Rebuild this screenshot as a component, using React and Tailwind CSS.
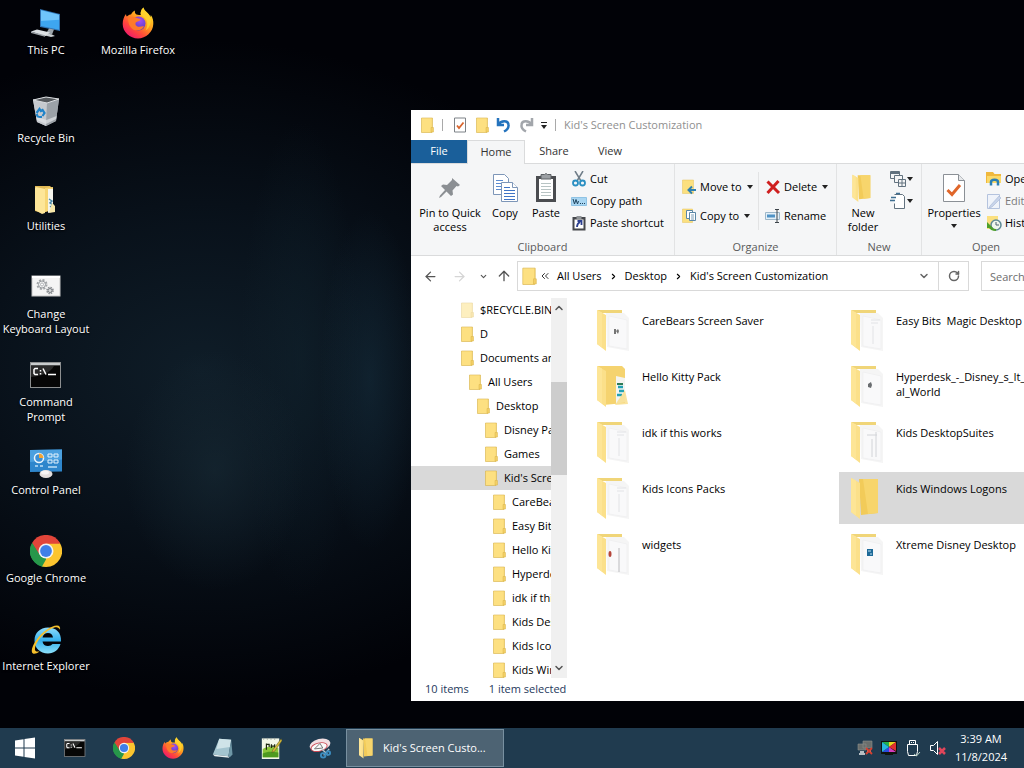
import React, { useState } from 'react';
import { ArrowLeft, ArrowRight, ArrowUp, ChevronDown, ChevronRight, ChevronUp, ChevronsLeft, RotateCw } from 'lucide-react';

/* ---------- Desktop icons ---------- */

const ThisPcIcon = ({ className }) => (
    <svg viewBox="0 0 32 32" className={className}>
        <path d="M10 2l20 5v17l-20-4z" fill="#2f6fae" />
        <path d="M11 3.300l18 4.400v15l-18-3.600z" fill="#3ea6f0" />
        <path d="M11 3.300l18 4.400v5L11 14z" fill="#6fc4fb" />
        <path d="M19 21.500l5 1-2 5-6-1z" fill="#9ba4ab" />
        <path d="M15 26l7 1.500 3 1.500-4 1-8-2z" fill="#c9ced2" />
        <path d="M1 24.500l6-2 13 3-5 3.800z" fill="#dde1e4" />
        <path d="M1 24.500l14 3.800v1.500L1 26z" fill="#9da3a8" />
    </svg>
);

const FirefoxIcon = ({ className }) => (
    <svg viewBox="0 0 32 32" className={className}>
        <defs>
            <linearGradient id="ffBody" x1="0.85" y1="0.1" x2="0.2" y2="0.95">
                <stop offset="0" stopColor="#ffe226" />
                <stop offset="0.4" stopColor="#ff9a1f" />
                <stop offset="0.7" stopColor="#ff4a3a" />
                <stop offset="1" stopColor="#f0186c" />
            </linearGradient>
            <radialGradient id="ffGlobe" cx="0.6" cy="0.3" r="0.8">
                <stop offset="0" stopColor="#a14df5" />
                <stop offset="1" stopColor="#4a3bb5" />
            </radialGradient>
        </defs>
        <path d="M4 7c0 1 .3 2 .8 2.600C6 8 8 7.400 9 7.400c1-2 3-3.400 4-3.800-.5 1.500 0 3 1.500 4 1 .6 3 .4 4.500.4-1-2.500.5-6 2.500-7.500.5 4 5.500 5 7 9.500.4-.8.300-1.600.1-2.200C31 11 31.500 14 31.300 17 31 25 24 31.500 16 31.500S.7 25 .7 17c0-4 1.300-7.500 3.300-10z" fill="url(#ffBody)" />
        <circle cx="16.500" cy="16.500" r="7" fill="url(#ffGlobe)" />
        <path d="M6 11c3-2 6-1.500 9 0 2 1 3.500.5 3.500 1.700-.3 1.300-2.500 1.500-4 2.200-1.500.8-1.500 3 .5 4.300 2.500 1.500 5-.5 7 .2-2 3.800-7 5-11 3C7.500 20 6 16 6 11z" fill="#ff7a2b" />
        <path d="M21.500.5c.5 4 6 5.500 7 11 1 6-2 10-5 12 2-3.500 2.500-8 .5-11-1.500-2.500-3.500-3-5-4.500-1-2.500.5-6 2.500-7.500z" fill="#ffd42e" opacity="0.85" />
    </svg>
);

const RecycleBinIcon = ({ className }) => (
    <svg viewBox="0 0 32 32" className={className}>
        <path d="M3 5l13-3 13 2-3 22-10 5-9-4z" fill="#b9bdc2" />
        <path d="M3 5l14 3-1 23-9-4z" fill="#c6cacf" />
        <path d="M17 8l12-4-3 22-10 5z" fill="#9ca2a8" />
        <path d="M3 5l13-3 13 2-12 4z" fill="#54585c" stroke="#dadde0" strokeWidth="1" />
        <path d="M6.500 18l3-4 2 3M12 14l2.500 4-2 3M12 22H8l-1.500-3" fill="none" stroke="#1f83c9" strokeWidth="2.200" />
        <path d="M7 25l9 4 10-5 .5-3-10 4-10-3z" fill="#e3e6e8" opacity="0.7" />
    </svg>
);

const UtilitiesIcon = ({ className }) => (
    <svg viewBox="0 0 32 32" className={className}>
        <path d="M5 3h15l2 2v22l-10 3-7-2z" fill="#e2b955" />
        <path d="M6 4l9 2v24l-3 1-7-4V5z" fill="#fde699" />
        <path d="M15 5l8-1v22l-8 3z" fill="#f7d676" />
        <path d="M18 6h5v22l-5 2z" fill="#f5f5ee" />
        <path d="M19 16l3 2-2 2 3 2-3 2" fill="none" stroke="#4a88a6" strokeWidth="1.500" />
        <path d="M22 20l3 3v6l-6 1z" fill="#f8e8aa" />
    </svg>
);

const BatchFileIcon = ({ className }) => (
    <svg viewBox="0 0 32 32" className={className}>
        <rect x="2" y="5" width="28" height="20" fill="#f4f4f4" stroke="#c6c6c6" />
        <rect x="2" y="5" width="28" height="2" fill="#ffffff" />
        <circle cx="12" cy="13.500" r="4.500" fill="none" stroke="#a2a5a8" strokeWidth="2" strokeDasharray="2 1.530" />
        <circle cx="12" cy="13.500" r="3.500" fill="#f1f1f1" stroke="#989ca0" />
        <circle cx="12" cy="13.500" r="1.500" fill="#fff" stroke="#989ca0" strokeWidth="0.700" />
        <circle cx="20" cy="19.500" r="3" fill="none" stroke="#8c9094" strokeWidth="1.600" strokeDasharray="1.500 0.860" />
        <circle cx="20" cy="19.500" r="2" fill="#d7d9da" stroke="#7c8084" />
    </svg>
);

const TerminalIcon = ({ className }) => (
    <svg viewBox="0 0 32 32" className={className}>
        <rect x="0.500" y="3.500" width="30" height="25" fill="#060606" stroke="#8d8f90" />
        <path d="M1 4h29v2.500H1z" fill="#c9cccd" />
        <path d="M1 18C12 17 20 14 24 7h6v-.5H1z" fill="#2a2a2a" />
        <path d="M8 9.500H5l-1 1v4l1 1h3M10.500 11v1.500M10.500 14v1.500M13 9.500l3 6M18 15.500h8" fill="none" stroke="#fff" strokeWidth="1.500" />
    </svg>
);

const ControlPanelIcon = ({ className }) => (
    <svg viewBox="0 0 32 32" className={className}>
        <path d="M0 3l32-.5v22L0 25z" fill="#2e86cc" />
        <path d="M0 3l32-.5v10L0 15z" fill="#4ba0df" />
        <circle cx="9" cy="11" r="4.500" fill="#3c8fd4" stroke="#e9f4fc" strokeWidth="1.500" />
        <path d="M9 11V6.500A4.500 4.500 0 0 1 13.500 11z" fill="#f3a534" />
        <path d="M18 7h4v3h-4zM24 7h4v3h-4zM18 13h4v3h-4zM24 13h4v3h-4z" fill="none" stroke="#e4f2fc" />
        <path d="M5 19h3M10 19h3M18 20h9" stroke="#bfe0f6" strokeWidth="1.500" />
        <ellipse cx="16" cy="27" rx="6.500" ry="4" fill="#e4dedd" />
        <ellipse cx="15" cy="25.500" rx="4" ry="2" fill="#f8f5f4" />
    </svg>
);

const ChromeIcon = ({ className }) => (
    <svg viewBox="0 0 32 32" className={className}>
        <path d="M16 16L2.100 8A16 16 0 0 1 29.900 8z" fill="#e2453a" />
        <path d="M16 16L29.900 8A16 16 0 0 1 16 32z" fill="#fcc52f" />
        <path d="M16 16v16A16 16 0 0 1 2.100 8z" fill="#27974a" />
        <path d="M16 8.500h13.900L22.500 19.800z" fill="#fcc52f" />
        <path d="M16 8.500H29.900L29 6.500H14z" fill="#e2453a" />
        <path d="M9.500 19.800L2.100 8l7-1 2 4z" fill="#e2453a" />
        <path d="M2.100 8l7.400 11.800L16 23.500 12 31.500A16 16 0 0 1 2.100 8z" fill="#27974a" />
        <path d="M22.500 19.800L16 32l-4-.5 4.500-8z" fill="#fcc52f" />
        <circle cx="16" cy="16" r="7.500" fill="#f1f3f4" />
        <circle cx="16" cy="16" r="5.900" fill="#3f7fe8" />
    </svg>
);

const ExplorerIcon = ({ className }) => (
    <svg viewBox="0 0 32 32" className={className}>
        <defs>
            <linearGradient id="ieBlue" x1="0" y1="0" x2="0" y2="1">
                <stop offset="0" stopColor="#8fdcfb" />
                <stop offset="0.5" stopColor="#35b1ee" />
                <stop offset="1" stopColor="#8be0fb" />
            </linearGradient>
        </defs>
        <path fillRule="evenodd" d="M31 18.500H12.500c.5 3 2.500 4.500 5.500 4.500 2 0 3.500-.8 4.500-2h8C28.500 27 24 30.500 18 30.500 10 30.500 4.500 25 4.500 17.500S10 4.500 18 4.500s13.500 5 13 14zM12.500 14.500H23c-.3-2.700-2-4.500-5-4.500s-5 1.800-5.500 4.500z" fill="url(#ieBlue)" />
        <path d="M30 7c.5-3-.5-4.500-3-4.500C21 2.500 12 9 7 16 2 23 .5 29 3 30.500c1.500.8 4-.2 6.500-2C6 29 4.500 28 5 25c.7-4 4-9.500 9-14 5.500-5 11-7.500 13.500-6.500 1.300.5 2 1 2.500 2.500z" fill="#f6c02c" />
    </svg>
);

/* ---------- Taskbar icons ---------- */

const WindowsLogo = ({ className }) => (
    <svg viewBox="0 0 24 24" className={className}>
        <path d="M2 4.500l8.500-1.300v8.300H2zM11.500 3L22 1.500v10H11.500zM2 12.500h8.500v8.300L2 19.500zM11.500 12.500H22v10L11.500 21z" fill="#fff" />
    </svg>
);

const NotebookIcon = ({ className }) => (
    <svg viewBox="0 0 24 24" className={className}>
        <path d="M9 2l13 1-3 18-17-2z" fill="#a3c4cf" />
        <path d="M9 2l13 1-1.500 8L6 13z" fill="#cfe3e8" />
        <path d="M2 19l17 2 1 1.500L4 21z" fill="#e8eff0" />
        <path d="M19 21l3-18 1.500 16-3 3z" fill="#6f97a6" />
    </svg>
);

const NotepadPlusIcon = ({ className }) => (
    <svg viewBox="0 0 24 24" className={className}>
        <path d="M2 1.500h19V24H2z" fill="#f3f7e8" />
        <path d="M3 13c5-3 10-3 17-1v10H3z" fill="#8cc63a" />
        <path d="M3 18c6-3 11-2 17-1v5H3z" fill="#4e9a1f" />
        <path d="M7 7v7M7 8h3v3M12.500 8v4M16 8v4M11.500 10h5" stroke="#1d2a10" strokeWidth="1.300" fill="none" />
        <path d="M23 2L14 14l-1 3 3-1.500L24 4z" fill="#d6bb3c" stroke="#4c4a20" strokeWidth="0.500" />
        <path d="M4 1v2M8 1v2M12 1v2M16 1v2" stroke="#9aa29a" />
    </svg>
);

const SnippingIcon = ({ className }) => (
    <svg viewBox="0 0 24 24" className={className}>
        <ellipse cx="12" cy="8.500" rx="11.500" ry="6.500" fill="#f2dfe2" transform="rotate(-14 12 8.500)" />
        <ellipse cx="11" cy="11" rx="9" ry="4.500" fill="#fafafa" stroke="#c94550" transform="rotate(-14 11 11)" />
        <path d="M6 13l6-6 3 5z" fill="none" stroke="#6b6b6b" />
        <path d="M14 13l7 7M22 13l-6 7" stroke="#b9c7cf" strokeWidth="1.500" />
        <circle cx="15.500" cy="20" r="2.500" fill="none" stroke="#3c8cc0" strokeWidth="2" />
        <circle cx="21" cy="17.500" r="2" fill="none" stroke="#3c8cc0" strokeWidth="2" />
    </svg>
);

/* ---------- Folder drawings ---------- */

const SmallFolder = ({ className, faded }) => (
    <svg viewBox="0 0 16 16" className={className} opacity={faded ? 0.5 : 1}>
        <path d="M2.500 1h11v12l-.5 2.500H2.500z" fill="#f6d672" stroke="#d9b44a" strokeWidth="0.600" />
        <path d="M3 1.500h9.500v11l-.5 2.500H3z" fill="#fde081" />
        <path d="M12 10.500h2.500V15H12z" fill="#f3cf66" stroke="#d9b44a" strokeWidth="0.500" />
    </svg>
);

const BigFolder = ({ className, inside }) => (
    <svg viewBox="0 0 48 48" className={className}>
        {inside !== 'empty' && <path d="M9 4h24v3H9z" fill="#f0d578" />}
        {inside === 'empty' && (
            <>
                <path d="M16 5h19v34l-17 2z" fill="#f2cb59" />
                <path d="M20 5h15v34l-10 1z" fill="#f7d56c" />
            </>
        )}
        {inside === 'kitty' && (
            <>
                <path d="M9 4h24l3 3v34l-22 2z" fill="#f5d36f" />
                <path d="M27 14l9 2v24l-9 2z" fill="#f4f4f0" />
                <path d="M28 21h6v2h-6z" fill="#2f7a56" />
                <path d="M29 25h5M30 29h5M28 33h5" stroke="#22a2b4" strokeWidth="2.500" />
                <path d="M36 28l3 14-13 1z" fill="#f8dc86" opacity="0.8" />
            </>
        )}
        {inside !== 'empty' && inside !== 'kitty' && (
            <>
                <path d="M17 7h18l5 5v33l-22-4z" fill="#f5f5f5" />
                <path d="M20 10l18 4v29l-18-3z" fill="#f9f9fa" stroke="#ececee" strokeWidth="0.600" />
            </>
        )}
        <path d="M8 4l9 5v36L8 38z" fill="#fbe08a" />
        <path d="M8 4l5 2.500v35L8 38z" fill="#fde596" />
        {inside === 'bear' && <path d="M25 23h2v5h-2zM27 25l2-2 1 2-1 3z" fill="#757575" />}
        {inside === 'page' && <path d="M28 14h9M28 17h7M30 20v18" stroke="#e2e3e6" fill="none" />}
        {inside === 'dot' && <path d="M25 22l3-2 1 3-1 3-3-1z" fill="#6a6d70" />}
        {inside === 'lines' && <path d="M24 17h10M29 21v18M33 14v25" stroke="#d2d4d8" fill="none" />}
        {inside === 'widget' && (
            <>
                <path d="M30 18v24" stroke="#cfcfd2" strokeWidth="1.500" fill="none" />
                <ellipse cx="21" cy="24" rx="1.500" ry="3" fill="#b5453a" />
            </>
        )}
        {inside === 'blue' && (
            <>
                <path d="M24 19h6v7h-6z" fill="#1e6a98" />
                <path d="M25 21h3M27 24h2" stroke="#bde0f1" />
            </>
        )}
    </svg>
);

/* ---------- Ribbon icons ---------- */

const PinIcon = () => (
    <svg viewBox="0 0 32 32" className="size-8">
        <path d="M18 6l8 7-2 1.500-1.500-.5-4 4.500.5 4-2 1.500-4.500-4.500L7 25l-2 1 1-2.500 5-5.500-4-4 2-1.500 4 .5L18 8z" fill="#8b8f93" />
    </svg>
);

const CopyIcon = () => (
    <svg viewBox="0 0 32 32" className="size-8" fill="#fff" stroke="#7d96b8">
        <path d="M4.500 2.500h11l4 4v16h-15z" />
        <path d="M7 8.500h7M7 11.500h10M7 14.500h10M7 17.500h6" stroke="#5b8bd0" />
        <path d="M12.500 10.500h11l5 5v14h-16z" />
        <path d="M23.500 10.500v5h5" />
        <path d="M15 15.500h6M15 18.500h11M15 21.500h11M15 24.500h11M15 27.500h11" stroke="#3f74c6" />
    </svg>
);

const PasteIcon = () => (
    <svg viewBox="0 0 32 32" className="size-8">
        <path d="M6 4h20v26H6z" fill="#4a4c50" />
        <path d="M9 7h14v20H9z" fill="#fff" />
        <path d="M11 2.500h3.500a1.800 1.800 0 0 1 3 0H21V7H11z" fill="#9b9fa3" stroke="#5c6064" />
        <path d="M11 11.500h10M11 14.500h10M11 17.500h10M11 20.500h10M11 23.500h10" stroke="#b8c4c4" />
    </svg>
);

const CutIcon = () => (
    <svg viewBox="0 0 16 16" className="size-4" fill="none">
        <path d="M4 0l6 10M12 0L6 10" stroke="#6f7d88" strokeWidth="1.500" />
        <circle cx="4.500" cy="12" r="2.500" stroke="#2b8fc2" strokeWidth="1.800" />
        <circle cx="11.500" cy="12" r="2.500" stroke="#2b8fc2" strokeWidth="1.800" />
    </svg>
);

const CopyPathIcon = () => (
    <svg viewBox="0 0 16 16" className="size-4">
        <path d="M.5 4.500h15v8H.5z" fill="#a9d6f2" stroke="#8fc3e4" />
        <path d="M2 6l1.500 5L5 6.500 6.500 11 7.500 8M9 10.500h1M11 10.500h1M13 10.500h1" fill="none" stroke="#1d425c" />
    </svg>
);

const PasteShortcutIcon = () => (
    <svg viewBox="0 0 16 16" className="size-4">
        <path d="M1.500 2h13v13.500h-13z" fill="#45474b" />
        <path d="M3.500 4.500h9v9h-9z" fill="#fff" />
        <path d="M5.500 1h5v3h-5z" fill="#8f9397" />
        <path d="M6 12c0-2.500 1-4 3-5M6.500 6h4v4" fill="none" stroke="#2c3f8f" strokeWidth="1.800" />
    </svg>
);

const MoveToIcon = () => (
    <svg viewBox="0 0 16 16" className="size-4">
        <path d="M1.500 1h11v13.500h-11z" fill="#fbe07f" stroke="#e6c35a" strokeWidth="0.500" />
        <path d="M15 11H8m3-3.500L7.500 11l3.500 3.500" fill="none" stroke="#2f80b0" strokeWidth="2" />
    </svg>
);

const CopyToIcon = () => (
    <svg viewBox="0 0 16 16" className="size-4">
        <path d="M1.500 1h10v13.500h-10z" fill="#fbe07f" stroke="#e6c35a" strokeWidth="0.500" />
        <path d="M5.500 2.500h6v8h-6z" fill="#fff" stroke="#5a87a6" />
        <path d="M8.500 4.500h6v8h-6z" fill="#fff" stroke="#5a87a6" />
        <path d="M10 7h3M10 9h3M10 11h3" stroke="#5a87a6" strokeWidth="0.800" />
    </svg>
);

const DeleteIcon = () => (
    <svg viewBox="0 0 16 16" className="size-4">
        <path d="M2.500 2.500l11.500 11.500M13.500 2L2.500 14" fill="none" stroke="#cf1f1f" strokeWidth="3" />
    </svg>
);

const RenameIcon = () => (
    <svg viewBox="0 0 16 16" className="size-4">
        <path d="M.5 4.500h14v7H.5z" fill="#e4f0f8" stroke="#9db7c9" />
        <path d="M2 6.500h8v3H2z" fill="#4f93c6" />
        <path d="M10 1.500h4M10 14.500h4M12 2v12" stroke="#3c444a" />
    </svg>
);

const NewItemIcon = () => (
    <svg viewBox="0 0 18 18" className="size-[18px]" fill="#f5f6f7" stroke="#62727f">
        <path d="M1.500 1.500h9v7h-9z" />
        <path d="M2 3h8" strokeWidth="2" />
        <path d="M5.500 5.500h8v7h-8z" />
        <path d="M9.500 9.500h7v7h-7zM9.500 13h7M13 9.500v7" />
    </svg>
);

const EasyAccessIcon = () => (
    <svg viewBox="0 0 18 18" className="size-[18px]" fill="none" stroke="#62727f">
        <path d="M5.500 2.500h8l2 2v12h-10v-5" fill="#fff" />
        <path d="M7 1.500h4M2 5.500h5M1 8.500h5" stroke="#3f6f92" strokeWidth="1.500" />
    </svg>
);

const PropertiesIcon = () => (
    <svg viewBox="0 0 32 32" className="size-8">
        <path d="M5.500 2.500h15l6 6v21h-21z" fill="#fff" stroke="#8b9096" />
        <path d="M20.500 2.500v6h6" fill="#e6e8ea" stroke="#8b9096" />
        <path d="M9.500 18l4.500 4.500L22 13" fill="none" stroke="#e0662a" strokeWidth="3" />
    </svg>
);

const CheckDocIcon = () => (
    <svg viewBox="0 0 16 16" className="size-4">
        <path d="M2.500 1h11v14h-11z" fill="#fff" stroke="#7d8287" />
        <path d="M5 8.500l2 2.500 4.500-5.500" fill="none" stroke="#d9652e" strokeWidth="1.800" />
    </svg>
);

const UndoIcon = ({ flip }) => (
    <svg viewBox="0 0 16 16" className="size-4">
        {flip ? (
            <path d="M14 1v7H8m5.500-.5C11 3 4 3 3.500 7.500 3 11 5 13 8 14.500" fill="none" stroke="#a2a6ab" strokeWidth="2.500" />
        ) : (
            <path d="M2 1v7h6M2.500 7.500C5 3 12 3 12.500 7.500 13 11 11 13 8 14.500" fill="none" stroke="#2473bd" strokeWidth="2.500" />
        )}
    </svg>
);

const OpenIcon = () => (
    <svg viewBox="0 0 16 16" className="size-4">
        <path d="M0 1h7l1.500 2H15v9H0z" fill="#f0b83c" />
        <path d="M1 5h14v7H1z" fill="#fbd968" />
        <path d="M5 14.500V11c0-3 7-3 7 0v3.500" fill="none" stroke="#2c7fb4" strokeWidth="2.500" />
    </svg>
);

const EditIcon = () => (
    <svg viewBox="0 0 16 16" className="size-4" opacity="0.75">
        <path d="M1.500 1.500h12v14h-12z" fill="#eef3fb" stroke="#9fb3d6" />
        <path d="M4 13l9-10 2 2-9 9-3 1z" fill="#b9c9e6" stroke="#8ba2cb" strokeWidth="0.600" />
    </svg>
);

const HistoryIcon = () => (
    <svg viewBox="0 0 16 16" className="size-4">
        <path d="M1 1h11v13H1z" fill="#fbe07f" />
        <circle cx="10" cy="10" r="5" fill="#eef6ee" stroke="#5e8a96" strokeWidth="1.500" />
        <path d="M10 7v3h3" fill="none" stroke="#4b6070" />
        <path d="M1 7v6h6z" fill="#4ea02a" />
        <path d="M3 11c2 4 5 4 7 4" stroke="#4ea02a" strokeWidth="2" fill="none" />
    </svg>
);

const Caret = ({ className = '' }) => (
    <svg viewBox="0 0 6 4" className={`h-1 w-1.5 shrink-0 ${className}`}>
        <path d="M0 0h6L3 4z" fill="#222" />
    </svg>
);

/* ---------- Tray icons ---------- */

const NetworkIcon = () => (
    <svg viewBox="0 0 16 16" className="size-4">
        <path d="M6 1h9v7H6zM1 4h8v6H1z" fill="#6a6e6c" stroke="#8d918f" strokeWidth="0.600" />
        <path d="M3 12h4M2 14h6M10 11h4" stroke="#e9ecec" strokeWidth="1.500" />
        <path d="M9 8l6 6M15 8l-6 6" stroke="#d8402f" strokeWidth="1.800" />
    </svg>
);

const ColorIcon = () => (
    <svg viewBox="0 0 16 16" className="size-4">
        <path d="M0 1h16v13H0z" fill="#10140f" />
        <path d="M1 2h7v5z" fill="#23b14d" />
        <path d="M8 2h7L8 7z" fill="#e8d820" />
        <path d="M15 2v9L8 7z" fill="#e03030" />
        <path d="M15 12H8V7z" fill="#d63cc0" />
        <path d="M8 12H1l7-5z" fill="#2c4be0" />
        <path d="M1 12V2l7 5z" fill="#27b6dd" />
        <path d="M4 14h8v1H4z" fill="#10140f" />
    </svg>
);

const UsbIcon = () => (
    <svg viewBox="0 0 16 20" className="h-5 w-4" fill="none" stroke="#fff">
        <path d="M4.500 6.500v-4h6v4M2.500 6.500h10v7l-1 4h-8l-1-4zM6.500 4v1M8.500 4v1" />
        <path d="M9 16l2.500 2L15 14" stroke="#b9d3c4" />
    </svg>
);

const MutedIcon = () => (
    <svg viewBox="0 0 18 16" className="h-4 w-[18px]" fill="none">
        <path d="M1.500 5.500h3l4-4v13l-4-4h-3z" stroke="#fff" />
        <path d="M10 8l6 6M16 8l-6 6" stroke="#e0455a" strokeWidth="2.500" />
    </svg>
);

/* ---------- Data ---------- */

const desktopColumns = [
    [
        { label: 'This PC', Icon: ThisPcIcon },
        { label: 'Recycle Bin', Icon: RecycleBinIcon },
        { label: 'Utilities', Icon: UtilitiesIcon },
        { label: 'Change\nKeyboard Layout', Icon: BatchFileIcon },
        { label: 'Command\nPrompt', Icon: TerminalIcon },
        { label: 'Control Panel', Icon: ControlPanelIcon },
        { label: 'Google Chrome', Icon: ChromeIcon },
        { label: 'Internet Explorer', Icon: ExplorerIcon },
    ],
    [{ label: 'Mozilla Firefox', Icon: FirefoxIcon }],
];

const indents = ['pl-12', 'pl-14', 'pl-16', 'pl-18', 'pl-20'];

const treeItems = [
    { label: '$RECYCLE.BIN', level: 0, faded: true },
    { label: 'D', level: 0 },
    { label: 'Documents and Settings', level: 0 },
    { label: 'All Users', level: 1 },
    { label: 'Desktop', level: 2 },
    { label: 'Disney Pack', level: 3 },
    { label: 'Games', level: 3 },
    { label: "Kid's Screen Customization", level: 3 },
    { label: 'CareBears Screen Saver', level: 4 },
    { label: 'Easy Bits  Magic Desktop', level: 4 },
    { label: 'Hello Kitty Pack', level: 4 },
    { label: 'Hyperdesk', level: 4 },
    { label: 'idk if this works', level: 4 },
    { label: 'Kids DesktopSuites', level: 4 },
    { label: 'Kids Icons Packs', level: 4 },
    { label: 'Kids Windows Logons', level: 4 },
];

const files = [
    { name: 'CareBears Screen Saver', inside: 'bear' },
    { name: 'Easy Bits  Magic Desktop', inside: 'page' },
    { name: 'Hello Kitty Pack', inside: 'kitty' },
    { name: 'Hyperdesk_-_Disney_s_It_s_a_Small_Magical_World', lines: ['Hyperdesk_-_Disney_s_It_s_a', 'al_World'], inside: 'dot' },
    { name: 'idk if this works', inside: 'page' },
    { name: 'Kids DesktopSuites', inside: 'lines' },
    { name: 'Kids Icons Packs', inside: 'page' },
    { name: 'Kids Windows Logons', inside: 'empty' },
    { name: 'widgets', inside: 'widget' },
    { name: 'Xtreme Disney Desktop', inside: 'blue' },
];

const taskbarApps = [
    { label: 'Command Prompt', Icon: TerminalIcon },
    { label: 'Google Chrome', Icon: ChromeIcon },
    { label: 'Mozilla Firefox', Icon: FirefoxIcon },
    { label: 'Notepad', Icon: NotebookIcon },
    { label: 'Notepad++', Icon: NotepadPlusIcon },
    { label: 'Snipping Tool', Icon: SnippingIcon },
];

/* ---------- Ribbon ---------- */

const BigButton = ({ icon, children, className = '' }) => (
    <button type="button" className={`flex flex-col items-center pt-2 leading-[14px] whitespace-nowrap ${className}`}>
        {icon}
        <span className="mt-0.5 block">{children}</span>
    </button>
);

const SmallButton = ({ icon, label, caret, className = '' }) => (
    <button type="button" className={`flex h-[22px] items-center gap-[3px] whitespace-nowrap ${className}`}>
        {icon}
        <span>{label}</span>
        {caret && <Caret className="ml-0.5" />}
    </button>
);

const RibbonGroup = ({ title, className, children }) => (
    <section aria-label={title} className={`flex shrink-0 flex-col border-r border-[#e2e3e4] ${className}`}>
        <div className="flex min-h-0 flex-1">{children}</div>
        <h2 className="text-center leading-[17px] text-[#5a5a5a]">{title}</h2>
    </section>
);

const Ribbon = () => (
    <div className="flex h-[93px] shrink-0 border-y border-[#dadbdc] bg-[#f5f6f7]">
        <RibbonGroup title="Clipboard" className="w-[264px]">
            <BigButton icon={<PinIcon />} className="w-[78px]">Pin to Quick<br />access</BigButton>
            <BigButton icon={<CopyIcon />} className="w-8">Copy</BigButton>
            <BigButton icon={<PasteIcon />} className="w-[50px]">Paste</BigButton>
            <div className="flex flex-col pt-1">
                <SmallButton icon={<CutIcon />} label="Cut" />
                <SmallButton icon={<CopyPathIcon />} label="Copy path" />
                <SmallButton icon={<PasteShortcutIcon />} label="Paste shortcut" />
            </div>
        </RibbonGroup>
        <RibbonGroup title="Organize" className="w-[162px]">
            <div className="flex w-[83px] flex-col gap-[7px] pt-3 pl-1.5">
                <SmallButton icon={<MoveToIcon />} label="Move to" caret />
                <SmallButton icon={<CopyToIcon />} label="Copy to" caret />
            </div>
            <div className="my-2 flex flex-col gap-[7px] border-l border-[#e2e3e4] pt-1 pl-1.5">
                <SmallButton icon={<DeleteIcon />} label="Delete" caret />
                <SmallButton icon={<RenameIcon />} label="Rename" />
            </div>
        </RibbonGroup>
        <RibbonGroup title="New" className="w-[85px]">
            <BigButton icon={<BigFolder inside="empty" className="size-8" />} className="w-[52px]">New<br />folder</BigButton>
            <div className="flex flex-col pt-1">
                <button type="button" aria-label="New item" className="flex h-[22px] items-center"><NewItemIcon /><Caret /></button>
                <button type="button" aria-label="Easy access" className="flex h-[22px] items-center"><EasyAccessIcon /><Caret /></button>
            </div>
        </RibbonGroup>
        <RibbonGroup title="Open" className="w-[129px]">
            <BigButton icon={<PropertiesIcon />} className="w-16">
                Properties
                <Caret className="mx-auto mt-1" />
            </BigButton>
            <div className="flex flex-col pt-1">
                <SmallButton icon={<OpenIcon />} label="Open" caret />
                <SmallButton icon={<EditIcon />} label="Edit" className="text-[#7b7b7b]" />
                <SmallButton icon={<HistoryIcon />} label="History" />
            </div>
        </RibbonGroup>
    </div>
);

/* ---------- Explorer window ---------- */

const TitleBar = () => (
    <header className="flex h-[30px] shrink-0 items-center pl-2 text-[#8f8f8f]">
        <SmallFolder className="size-4" />
        <span className="ml-[7px] h-3 w-px bg-[#a9a9a9]" />
        <div className="ml-[9px] flex items-center gap-[6px]">
            <button type="button" aria-label="Properties"><CheckDocIcon /></button>
            <button type="button" aria-label="New folder"><SmallFolder className="size-4" /></button>
            <button type="button" aria-label="Undo"><UndoIcon /></button>
            <button type="button" aria-label="Redo"><UndoIcon flip /></button>
            <button type="button" aria-label="Customize toolbar" className="ml-px flex flex-col items-center gap-0.5">
                <span className="h-px w-1.5 bg-[#222]" />
                <Caret />
            </button>
        </div>
        <span className="mx-2 h-3 w-px bg-[#a9a9a9]" />
        <h1>Kid's Screen Customization</h1>
    </header>
);

const AddressBar = () => (
    <div className="flex shrink-0 items-center py-[5px] pr-2">
        <div className="flex w-[106px] items-center pl-3 text-[#555]">
            <button type="button" aria-label="Back"><ArrowLeft size={15} /></button>
            <button type="button" aria-label="Forward" className="ml-3.5 text-[#d5d5d5]"><ArrowRight size={15} /></button>
            <button type="button" aria-label="Recent" className="ml-3"><ChevronDown size={9} strokeWidth={3} /></button>
            <button type="button" aria-label="Up" className="ml-2"><ArrowUp size={16} /></button>
        </div>
        <div className="flex h-[30px] flex-1 items-center border border-[#d9d9d9]">
            <SmallFolder className="ml-0.5 size-[18px]" />
            <ChevronsLeft size={12} className="ml-px text-[#333]" />
            <nav aria-label="Path" className="ml-1.5 flex flex-1 items-center gap-[7px]">
                <button type="button">All Users</button>
                <ChevronRight size={9} strokeWidth={3} />
                <button type="button">Desktop</button>
                <ChevronRight size={9} strokeWidth={3} />
                <button type="button">Kid's Screen Customization</button>
            </nav>
            <button type="button" aria-label="Previous locations" className="mr-2 text-[#666]"><ChevronDown size={12} strokeWidth={3} /></button>
            <button type="button" aria-label="Refresh" className="flex h-full w-[30px] items-center justify-center border-l border-[#d9d9d9] text-[#666]"><RotateCw size={12} strokeWidth={3} /></button>
        </div>
        <input type="search" aria-label="Search" placeholder="Search Kid's Screen" className="ml-3 h-[30px] w-28 border border-[#d9d9d9] px-2 placeholder:text-[#6d6d6d] focus:outline-none" />
    </div>
);

const FolderTree = ({ current, onOpen }) => (
    <div className="flex w-[156px] shrink-0 overflow-hidden">
        <ul className="w-[140px] overflow-hidden">
            {treeItems.map((item) => (
                <li key={item.label}>
                    <button
                        type="button"
                        onClick={() => onOpen(item.label)}
                        className={`flex h-6 w-full items-center gap-[5px] whitespace-pre ${indents[item.level]} ${current === item.label ? 'bg-[#d9d9d9]' : ''}`}
                    >
                        <SmallFolder className="size-4 shrink-0" faded={item.faded} />
                        <span>{item.label}</span>
                    </button>
                </li>
            ))}
        </ul>
        <div className="flex w-4 flex-col items-center bg-[#f0f0f0] text-[#555]">
            <ChevronUp size={12} strokeWidth={3} className="mt-1" />
            <div className="mt-[68px] h-[93px] w-full bg-[#cdcdcd]" />
            <ChevronDown size={12} strokeWidth={3} className="mt-auto mb-1" />
        </div>
    </div>
);

const FileGrid = ({ selected, onSelect }) => (
    <ul className="grid flex-1 auto-rows-min grid-cols-2 gap-x-0.5 gap-y-1 pt-1.5 pr-2.5 pl-[18px]">
        {files.map((file) => (
            <li key={file.name}>
                <button
                    type="button"
                    title={file.name}
                    onClick={() => onSelect(file.name)}
                    className={`flex h-[52px] w-full items-start gap-[5px] overflow-hidden pl-1 text-left ${selected === file.name ? 'bg-[#d9d9d9]' : ''}`}
                >
                    <BigFolder inside={file.inside} className="mt-0.5 size-12 shrink-0" />
                    <span className="pt-[9px] leading-[15px] whitespace-pre">{file.lines ? file.lines.join('\n') : file.name}</span>
                </button>
            </li>
        ))}
    </ul>
);

const ExplorerWindow = () => {
    const [current, setCurrent] = useState("Kid's Screen Customization");
    const [selected, setSelected] = useState('Kids Windows Logons');

    return (
        <section className="absolute top-[110px] bottom-[27px] left-[411px] flex w-[690px] flex-col bg-white text-black">
            <TitleBar />
            <div className="flex h-[23px] shrink-0 text-[#333]">
                <button type="button" className="w-14 bg-[#1a5f9a] text-white">File</button>
                <button type="button" className="relative -mb-px w-[58px] border border-b-0 border-[#dadbdc] bg-[#f5f6f7]">Home</button>
                <button type="button" className="w-[58px]">Share</button>
                <button type="button" className="w-[54px]">View</button>
            </div>
            <Ribbon />
            <AddressBar />
            <div className="flex min-h-0 flex-1 pt-0.5">
                <FolderTree current={current} onOpen={setCurrent} />
                <FileGrid selected={selected} onSelect={setSelected} />
            </div>
            <footer className="flex h-[23px] shrink-0 items-center gap-5 pl-3.5 text-[#25395c]">
                <span>10 items</span>
                <span>1 item selected</span>
            </footer>
        </section>
    );
};

/* ---------- Desktop ---------- */

const App = () => {
    return (
        <div className="flex h-screen flex-col overflow-hidden bg-[#010207] font-['Open_Sans','Noto_Sans',sans-serif] text-[11px]">
            <main className="relative flex min-h-0 flex-1 bg-[radial-gradient(ellipse_50px_170px_at_370px_380px,#1d3f5255,transparent),radial-gradient(ellipse_90px_120px_at_215px_470px,#1c313c77,transparent),radial-gradient(ellipse_60px_240px_at_300px_360px,#12263166,transparent),radial-gradient(ellipse_430px_330px_at_200px_370px,#0f1d28,#0a141edd_45%,transparent)]">
                {desktopColumns.map((column, i) => (
                    <ul key={i} className="w-[92px] shrink-0 pt-[7px]">
                        {column.map(({ label, Icon }) => (
                            <li key={label} className="h-[88px]">
                                <button type="button" className="flex w-full flex-col items-center gap-[3px] leading-[15px] text-white [text-shadow:0_1px_2px_#000]">
                                    <Icon className="size-8" />
                                    <span className="whitespace-pre">{label}</span>
                                </button>
                            </li>
                        ))}
                    </ul>
                ))}
                <ExplorerWindow />
            </main>

            {/* Taskbar */}
            <footer className="flex h-10 shrink-0 items-center bg-[#203b4f] text-white">
                <button type="button" aria-label="Start" className="flex h-full w-[50px] items-center justify-center"><WindowsLogo className="size-6" /></button>
                {taskbarApps.map(({ label, Icon }) => (
                    <button key={label} type="button" aria-label={label} className="flex h-full w-[49px] items-center justify-center">
                        <Icon className="size-[22px]" />
                    </button>
                ))}
                <button type="button" className="ml-0.5 flex h-[38px] w-[158px] items-center gap-1 border border-[#7890a0] bg-[#4d6373] pl-2">
                    <BigFolder inside="empty" className="size-6" />
                    <span>Kid's Screen Custo...</span>
                </button>
                <div className="ml-auto flex items-center gap-2">
                    <NetworkIcon />
                    <ColorIcon />
                    <UsbIcon />
                    <MutedIcon />
                </div>
                <div className="mr-[9px] w-[68px] text-center leading-[18px]">
                    <p>3:39 AM</p>
                    <p>11/8/2024</p>
                </div>
            </footer>
        </div>
    );
};

export default App;
